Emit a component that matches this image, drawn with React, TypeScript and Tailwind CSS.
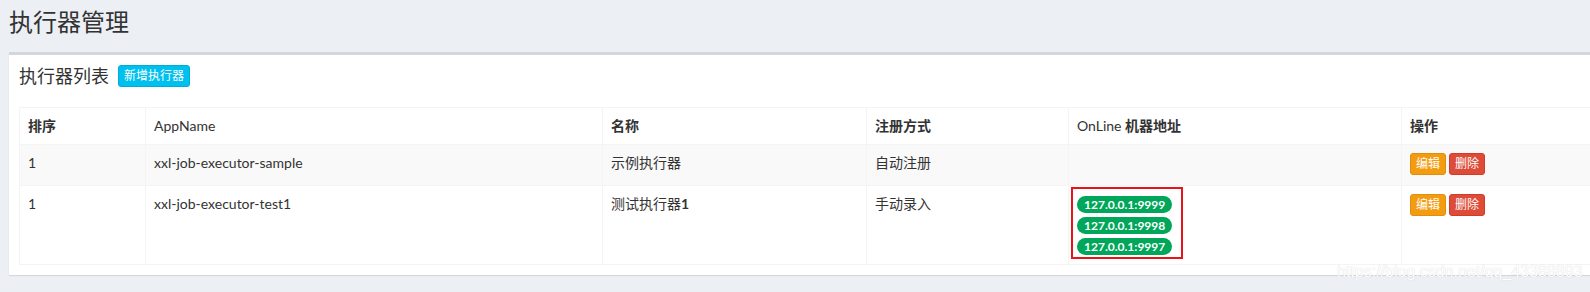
const rows = [
  {
    order: "1",
    appName: "xxl-job-executor-sample",
    title: "示例执行器",
    addressType: "自动注册",
    addresses: [] as string[],
  },
  {
    order: "1",
    appName: "xxl-job-executor-test1",
    title: "测试执行器",
    suffix: "1",
    addressType: "手动录入",
    addresses: ["127.0.0.1:9999", "127.0.0.1:9998", "127.0.0.1:9997"],
  },
];

function ActionButtons() {
  return (
    <div className="flex gap-[3px]">
      <button className="h-[22px] rounded-[3px] border border-[#e08e0b] bg-[#f39c12] px-[5px] text-[12px] leading-[18px] text-white">
        编辑
      </button>
      <button className="h-[22px] rounded-[3px] border border-[#d73925] bg-[#dd4b39] px-[5px] text-[12px] leading-[18px] text-white">
        删除
      </button>
    </div>
  );
}

export default function App() {
  return (
    <div className="relative h-[292px] w-full overflow-hidden bg-[#ecf0f5] font-['Lato','Noto_Sans_CJK_SC',sans-serif] text-[#333]">
      <h1 className="pl-[9px] pt-[9px] text-[24px] leading-[26px] font-normal">执行器管理</h1>

      <div className="ml-[9px] mt-[17px] w-[1652px] border-t-[3px] border-[#d2d6de] bg-white shadow-[0_1px_1px_rgba(0,0,0,0.1)]">
        {/* box header */}
        <div className="flex items-center gap-[9px] p-[10px]">
          <h3 className="text-[18px] leading-none font-normal">执行器列表</h3>
          <button className="h-[22px] rounded-[3px] border border-[#00acd6] bg-[#00c0ef] px-[5px] text-[12px] leading-[18px] text-white">
            新增执行器
          </button>
        </div>

        {/* box body */}
        <div className="px-[10px] pt-[10px] pb-[10px]">
          <table className="w-[1632px] table-fixed border-collapse text-[14px] leading-[20px]">
            <colgroup>
              <col className="w-[126px]" />
              <col className="w-[457px]" />
              <col className="w-[264px]" />
              <col className="w-[202px]" />
              <col className="w-[333px]" />
              <col className="w-[250px]" />
            </colgroup>
            <thead>
              <tr className="h-[37px]">
                <th className="border border-[#f4f4f4] px-[8px] py-[8px] text-left align-top font-bold">排序</th>
                <th className="border border-[#f4f4f4] px-[8px] py-[8px] text-left align-top font-normal">AppName</th>
                <th className="border border-[#f4f4f4] px-[8px] py-[8px] text-left align-top font-bold">名称</th>
                <th className="border border-[#f4f4f4] px-[8px] py-[8px] text-left align-top font-bold">注册方式</th>
                <th className="border border-[#f4f4f4] px-[8px] py-[8px] text-left align-top font-bold">
                  <span className="font-normal">OnLine</span> 机器地址
                </th>
                <th className="border border-[#f4f4f4] px-[8px] py-[8px] text-left align-top font-bold">操作</th>
              </tr>
            </thead>
            <tbody>
              {rows.map((r, i) => (
                <tr key={i} className={i === 0 ? "h-[41px] bg-[#f9f9f9]" : "h-[79px] bg-white"}>
                  <td className="border border-[#f4f4f4] p-[8px] align-top">{r.order}</td>
                  <td className="border border-[#f4f4f4] p-[8px] align-top">{r.appName}</td>
                  <td className="border border-[#f4f4f4] p-[8px] align-top">
                    {r.title}
                    {r.suffix && <span className="font-bold">{r.suffix}</span>}
                  </td>
                  <td className="border border-[#f4f4f4] p-[8px] align-top">{r.addressType}</td>
                  {r.addresses.length > 0 ? (
                    <td className="border border-[#f4f4f4] pl-[2px] pt-[1px] align-top">
                      <div className="flex w-[112px] flex-col items-start gap-[4px] border-2 border-[#e8141c] pt-[7px] pb-[2px] pl-[4px]">
                        {r.addresses.map((a) => (
                          <span
                            key={a}
                            className="h-[17px] rounded-full bg-[#00a65a] px-[7px] text-[12px] leading-[17px] font-bold text-white"
                          >
                            {a}
                          </span>
                        ))}
                      </div>
                    </td>
                  ) : (
                    <td className="border border-[#f4f4f4] p-[8px] align-top"></td>
                  )}
                  <td className="border border-[#f4f4f4] p-[8px] align-top">
                    <ActionButtons />
                  </td>
                </tr>
              ))}
            </tbody>
          </table>
        </div>
      </div>

      {/* csdn watermark */}
      <div className="absolute left-[1337px] top-[262px] font-['Liberation_Sans',sans-serif] text-[16px] leading-[20px] text-white [text-shadow:0_0_1px_rgba(0,0,0,0.2)]">
        https://blog.csdn.net/qq_43388893
      </div>
    </div>
  );
}
